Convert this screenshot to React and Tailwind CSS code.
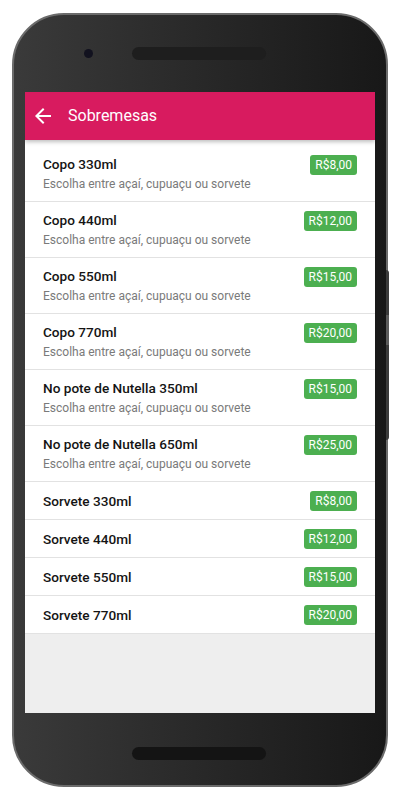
const items = [
  { name: 'Copo 330ml', desc: 'Escolha entre açaí, cupuaçu ou sorvete', price: 'R$8,00' },
  { name: 'Copo 440ml', desc: 'Escolha entre açaí, cupuaçu ou sorvete', price: 'R$12,00' },
  { name: 'Copo 550ml', desc: 'Escolha entre açaí, cupuaçu ou sorvete', price: 'R$15,00' },
  { name: 'Copo 770ml', desc: 'Escolha entre açaí, cupuaçu ou sorvete', price: 'R$20,00' },
  { name: 'No pote de Nutella 350ml', desc: 'Escolha entre açaí, cupuaçu ou sorvete', price: 'R$15,00' },
  { name: 'No pote de Nutella 650ml', desc: 'Escolha entre açaí, cupuaçu ou sorvete', price: 'R$25,00' },
  { name: 'Sorvete 330ml', price: 'R$8,00' },
  { name: 'Sorvete 440ml', price: 'R$12,00' },
  { name: 'Sorvete 550ml', price: 'R$15,00' },
  { name: 'Sorvete 770ml', price: 'R$20,00' },
];

const ArrowBack = () => (
  <svg width="24" height="24" viewBox="0 0 24 24" fill="white">
    <path d="M20 11H7.83l5.59-5.59L12 4l-8 8 8 8 1.41-1.41L7.83 13H20v-2z" />
  </svg>
);

const Row = ({ item }) => (
  <div
    className={`flex justify-between border-b border-[#e2e2e2] bg-white pl-[18px] pr-[18px] ${
      item.desc ? 'h-[56px] pt-[9px]' : 'h-[38px] items-center'
    }`}
  >
    <div className="flex flex-col">
      <span className="text-[13.6px] leading-[18px] font-medium text-[#141414]">{item.name}</span>
      {item.desc && (
        <span className="mt-[3px] text-[12px] leading-[16px] text-[#7a7a7a]">{item.desc}</span>
      )}
    </div>
    <span className="flex h-[20px] items-center rounded-[3px] bg-[#4caf50] px-[5px] text-[12px] text-white">
      {item.price}
    </span>
  </div>
);

export default function App() {
  return (
    <div className="h-[800px] w-[400px] bg-white pl-[12px] pt-[13px] font-['Roboto',sans-serif]">
      <div className="relative flex h-[774px] w-[376px] flex-col rounded-[52px] border-2 border-[#6b6b6b] bg-gradient-to-r from-[#3a3a3a] to-[#181818]">
        {/* side buttons */}
        <div className="absolute right-[-3px] top-[255px] h-[170px] w-[3px] rounded-r-sm bg-[#3c3c3c]" />
        <div className="absolute right-[-3px] top-[300px] h-[30px] w-[3px] bg-[#5c5c5c]" />

        {/* top bezel */}
        <div className="flex h-[77px] shrink-0 items-center pl-[70px]">
          <div className="h-[9px] w-[9px] rounded-full bg-[#12121f]" />
          <div className="ml-[39px] h-[13px] w-[134px] rounded-full bg-[#1e1e1e]" />
        </div>

        {/* screen */}
        <div className="mx-[11px] flex h-[621px] shrink-0 flex-col overflow-hidden bg-[#eeeeee]">
          <div className="relative z-10 flex h-[48px] shrink-0 items-center bg-[#d81b5f] pl-[6px] shadow-[0_2px_4px_rgba(0,0,0,0.25)]">
            <ArrowBack />
            <span className="ml-[13px] text-[16px] text-white">Sobremesas</span>
          </div>
          <div className="h-[6px] shrink-0 bg-white" />
          <div className="flex flex-col">
            {items.map((item) => (
              <Row key={item.name} item={item} />
            ))}
          </div>
        </div>

        {/* bottom bezel */}
        <div className="flex flex-1 justify-center pt-[34px]">
          <div className="ml-[-3px] h-[13px] w-[134px] rounded-full bg-[#141414]" />
        </div>
      </div>
    </div>
  );
}
